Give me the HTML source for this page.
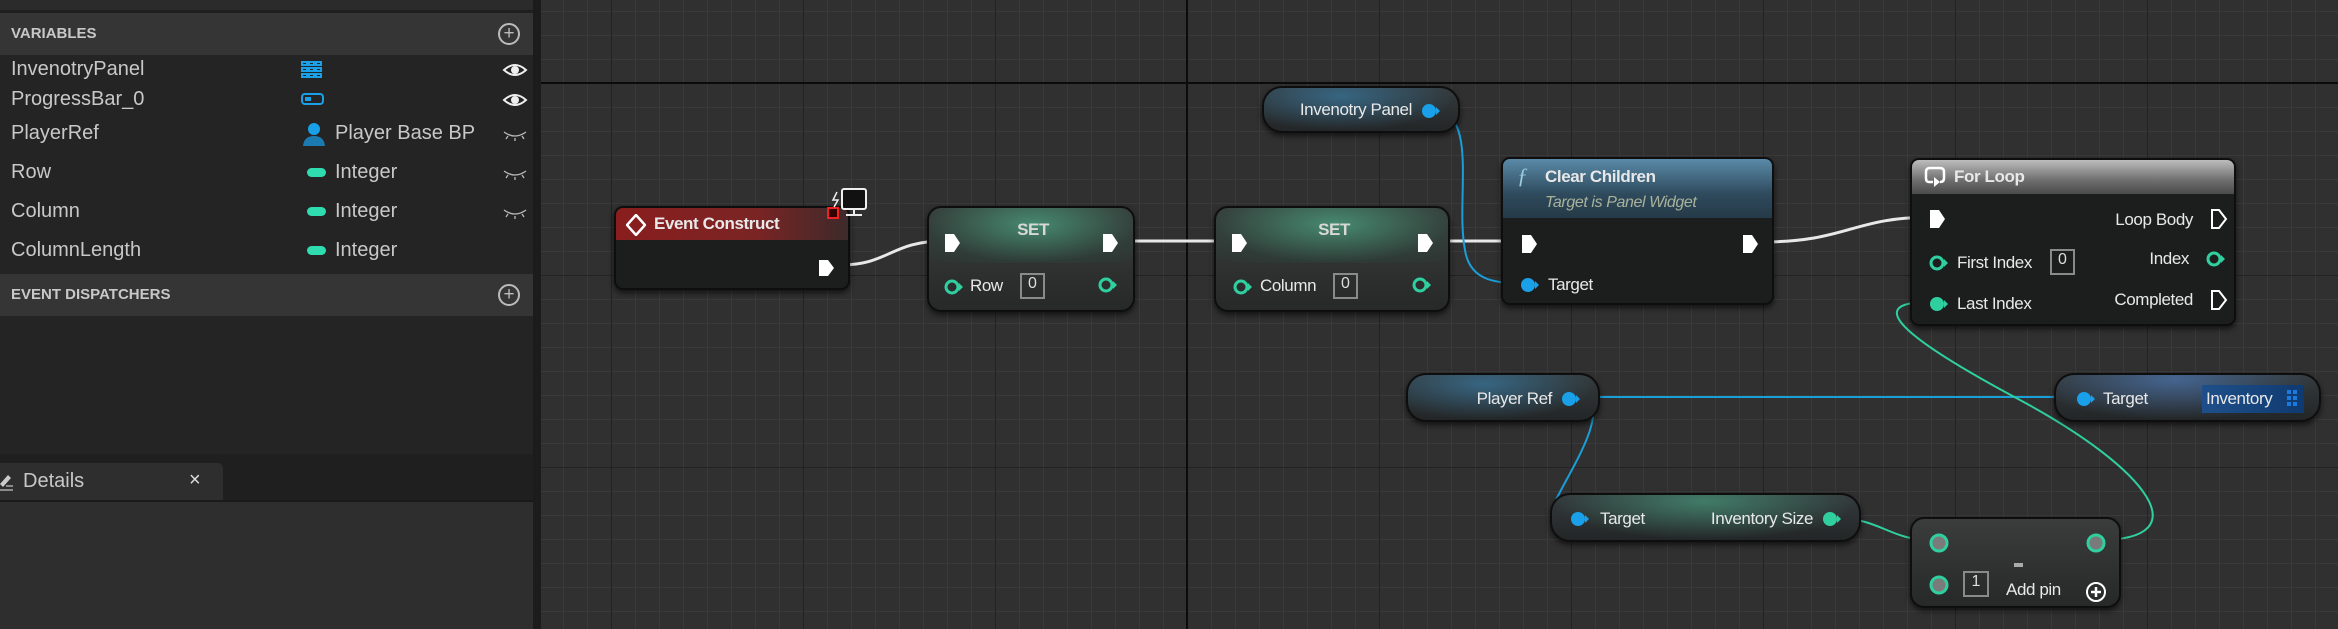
<!DOCTYPE html>
<html><head><meta charset="utf-8"><style>
*{margin:0;padding:0;box-sizing:border-box}
body{width:2338px;height:629px;overflow:hidden;position:relative;font-family:"Liberation Sans",sans-serif;
background-color:#303030;
background-image:
linear-gradient(#0b0b0b,#0b0b0b),linear-gradient(#0b0b0b,#0b0b0b),
linear-gradient(to right,#232323 1px,transparent 1px),linear-gradient(to bottom,#232323 1px,transparent 1px),
linear-gradient(to right,#3a3a3a 1px,transparent 1px),linear-gradient(to bottom,#3a3a3a 1px,transparent 1px);
background-size:2px 629px,2338px 2px,192px 192px,192px 192px,24px 24px,24px 24px;
background-position:1186px 0,0 82px,35px 83px,35px 83px,11px 11px,11px 11px;
background-repeat:no-repeat,no-repeat,repeat,repeat,repeat,repeat}
.a{position:absolute}
.panel{left:0;top:0;width:533px;height:629px;background:#1f1f1f}
.strip{left:533px;top:0;width:8px;height:629px;background:#1c1c1c}
.hdr{position:absolute;left:0;width:533px;height:42px;background:#353535;color:#c8c8c8;font-weight:bold;font-size:15px;line-height:42px;padding-left:11px}
.plus{position:absolute;right:13px;top:10px;width:22px;height:22px;border:2px solid #bbb;border-radius:50%;color:#bbb;font-size:19px;line-height:17px;text-align:center;font-weight:normal}
.row{position:absolute;left:11px;color:#c8c8c8;font-size:20px}
.ty{position:absolute;left:335px;color:#c8c8c8;font-size:20px}
.pill{position:absolute;left:307px;width:19px;height:9px;border-radius:5px;background:#2fdcb0}
.node{position:absolute;border-radius:9px;background:#1c1e1d;border:2px solid #0e0e0e;box-shadow:0 3px 6px rgba(0,0,0,.6);overflow:hidden}
.t{position:absolute;color:#e8e8e8;font-size:17px;letter-spacing:-0.4px;white-space:nowrap}
.pure{background:linear-gradient(#3a3d3c,#262928);border-radius:14px}
.box{position:absolute;border:2px solid #8a8a8a;color:#ddd;font-size:16px;text-align:center}
</style></head><body>
<div class="a panel">
 <div class="a" style="left:0;top:0;width:533px;height:10px;background:#2b2b2b"></div>
 <div class="a" style="left:0;top:14px;width:533px;height:440px;background:#242424"></div>
 <div class="hdr" style="top:13px">VARIABLES<div class="plus">+</div></div>
 <div class="row" style="top:58px">InvenotryPanel</div>
 <div class="row" style="top:88px">ProgressBar_0</div>
 <div class="row" style="top:122px">PlayerRef</div>
 <div class="row" style="top:161px">Row</div>
 <div class="row" style="top:200px">Column</div>
 <div class="row" style="top:239px">ColumnLength</div>
 <svg class="a" style="left:300px;top:60px" width="26" height="20"><g fill="none" stroke="#19a0e8" stroke-width="2"><rect x="2" y="2" width="5" height="3"/><rect x="9" y="2" width="5" height="3"/><rect x="16" y="2" width="5" height="3"/><rect x="2" y="8" width="5" height="3"/><rect x="9" y="8" width="5" height="3"/><rect x="16" y="8" width="5" height="3"/><rect x="2" y="14" width="5" height="3"/><rect x="9" y="14" width="5" height="3"/><rect x="16" y="14" width="5" height="3"/></g></svg>
 <svg class="a" style="left:300px;top:92px" width="26" height="16"><rect x="2" y="2" width="21" height="10" rx="3" fill="none" stroke="#19a0e8" stroke-width="2"/><rect x="5" y="5" width="6" height="4" fill="#19a0e8"/></svg>
 <svg class="a" style="left:302px;top:121px" width="26" height="26"><circle cx="12" cy="8" r="6" fill="#19a0e8"/><path d="M1 25 Q2 15 12 15 Q22 15 23 25Z" fill="#1b7bb0"/></svg>
 <div class="ty" style="top:122px">Player Base BP</div>
 <div class="pill" style="top:168px"></div><div class="ty" style="top:161px">Integer</div>
 <div class="pill" style="top:207px"></div><div class="ty" style="top:200px">Integer</div>
 <div class="pill" style="top:246px"></div><div class="ty" style="top:239px">Integer</div>
 <svg class="a" style="left:502px;top:60px" width="26" height="160"><g fill="none" stroke="#eee" stroke-width="2"><path d="M2 10 Q13 0 24 10 Q13 20 2 10Z"/><circle cx="13" cy="10" r="3" fill="#eee"/><path d="M2 40 Q13 30 24 40 Q13 50 2 40Z"/><circle cx="13" cy="40" r="3" fill="#eee"/></g><g fill="none" stroke="#bbb" stroke-width="1.3"><path d="M2 72 Q13 80 24 72M6 76l-2 3M13 78v3M20 76l2 3"/><path d="M2 111 Q13 119 24 111M6 115l-2 3M13 117v3M20 115l2 3"/><path d="M2 150 Q13 158 24 150M6 154l-2 3M13 156v3M20 154l2 3"/></g></svg>
 <div class="hdr" style="top:274px">EVENT DISPATCHERS<div class="plus">+</div></div>
 <div class="a" style="left:0;top:463px;width:223px;height:38px;background:#2e2e2e;border-radius:0 5px 0 0"></div>
 <svg class="a" style="left:0;top:472px" width="14" height="20"><path d="M0 12 L8 3 L11 6 L3 15Z" fill="#ccc"/><path d="M0 18h13M6 14h7" stroke="#aaa" stroke-width="1.5"/></svg>
 <div class="a" style="left:23px;top:470px;color:#c8c8c8;font-size:20px">Details</div>
 <div class="a" style="left:189px;top:469px;color:#ddd;font-size:20px">×</div>
 <div class="a" style="left:0;top:500px;width:533px;height:2px;background:#1a1a1a"></div>
 <div class="a" style="left:0;top:502px;width:533px;height:127px;background:#2e2e2e"></div>
</div>
<div class="a strip"></div>

<svg class="a" style="left:0;top:0" width="2338" height="629">
 <g fill="none" stroke="#e8e8e8" stroke-width="3">
  <path d="M840 265 C890 265 890 241 945 241"/>
  <path d="M1115 241 L1235 241"/>
  <path d="M1425 241 L1527 241"/>
  <path d="M1760 242 C1850 242 1850 217 1935 217"/>
 </g>
 <g fill="none" stroke="#1a9ed8" stroke-width="2">
  <path d="M1432 110 C1480 110 1455 200 1465 250 C1470 283 1500 283 1522 283"/>
  <path d="M1574 397 L2076 397"/>
  <path d="M1574 397 C1620 397 1570 470 1556 500 C1550 518 1560 518 1571 518"/>
 </g>
 <g fill="none" stroke="#2fcf9f" stroke-width="2">
  <path d="M1835 518 C1880 518 1890 540 1930 540"/>
  <path d="M2099 540 C2200 540 2150 470 2020 400 C1870 320 1880 302 1930 302"/>
 </g>
</svg>

<div class="node" style="left:614px;top:206px;width:236px;height:84px">
 <div class="a" style="left:0;top:0;width:236px;height:32px;background:linear-gradient(90deg,#8a1e1e,#7a2424 60%,#3a2a2a)"></div>
 <svg class="a" style="left:10px;top:6px" width="20" height="22"><path d="M10 1 L19 11 L10 21 L1 11Z" fill="none" stroke="#fff" stroke-width="2.5"/></svg>
 <div class="t" style="left:38px;top:6px;font-weight:bold">Event Construct</div>
 <svg class="a" style="left:201px;top:50px" width="20" height="20"><path d="M2 2 H11 L17 10 L11 18 H2Z" fill="#fff"/></svg>
</div>
<svg class="a" style="left:826px;top:186px" width="44" height="40"><rect x="2" y="22" width="10" height="10" fill="#300" stroke="#e22" stroke-width="2"/><rect x="16" y="3" width="24" height="20" rx="2" fill="#111" stroke="#eee" stroke-width="2"/><path d="M28 23v5M20 29h16" stroke="#eee" stroke-width="2"/><path d="M11 6 L7 14 L12 14 L8 21" stroke="#eee" stroke-width="1.5" fill="none"/></svg>

<div class="node pure" style="left:927px;top:206px;width:208px;height:106px">
 <div class="a" style="left:0;top:0;width:208px;height:55px;background:radial-gradient(ellipse at 50% 30%,rgba(80,190,150,.6),rgba(40,90,70,.2) 70%,transparent)"></div>
 <div class="t" style="left:0;width:208px;text-align:center;top:12px;font-weight:bold;color:#d8d8d8">SET</div>
 <svg class="a" style="left:14px;top:24px" width="20" height="22"><path d="M2 2 H11 L17 11 L11 20 H2Z" fill="#fff"/></svg>
 <svg class="a" style="left:172px;top:24px" width="20" height="22"><path d="M2 2 H11 L17 11 L11 20 H2Z" fill="#fff"/></svg>
 <svg class="a" style="left:14px;top:69px" width="22" height="20"><circle cx="9" cy="10" r="6" fill="none" stroke="#2fcf9f" stroke-width="3"/><path d="M16 6 L20 10 L16 14Z" fill="#2fcf9f"/></svg>
 <div class="t" style="left:41px;top:68px">Row</div>
 <div class="box" style="left:91px;top:65px;width:25px;height:26px">0</div>
 <svg class="a" style="left:168px;top:67px" width="22" height="20"><circle cx="9" cy="10" r="6" fill="none" stroke="#2fcf9f" stroke-width="3"/><path d="M16 6 L20 10 L16 14Z" fill="#2fcf9f"/></svg>
</div>
<div class="node pure" style="left:1214px;top:206px;width:236px;height:106px">
 <div class="a" style="left:0;top:0;width:236px;height:55px;background:radial-gradient(ellipse at 50% 30%,rgba(80,190,150,.6),rgba(40,90,70,.2) 70%,transparent)"></div>
 <div class="t" style="left:0;width:236px;text-align:center;top:12px;font-weight:bold;color:#d8d8d8">SET</div>
 <svg class="a" style="left:14px;top:24px" width="20" height="22"><path d="M2 2 H11 L17 11 L11 20 H2Z" fill="#fff"/></svg>
 <svg class="a" style="left:200px;top:24px" width="20" height="22"><path d="M2 2 H11 L17 11 L11 20 H2Z" fill="#fff"/></svg>
 <svg class="a" style="left:16px;top:69px" width="22" height="20"><circle cx="9" cy="10" r="6" fill="none" stroke="#2fcf9f" stroke-width="3"/><path d="M16 6 L20 10 L16 14Z" fill="#2fcf9f"/></svg>
 <div class="t" style="left:44px;top:68px">Column</div>
 <div class="box" style="left:117px;top:65px;width:25px;height:26px">0</div>
 <svg class="a" style="left:195px;top:67px" width="22" height="20"><circle cx="9" cy="10" r="6" fill="none" stroke="#2fcf9f" stroke-width="3"/><path d="M16 6 L20 10 L16 14Z" fill="#2fcf9f"/></svg>
</div>

<div class="node pure" style="left:1262px;top:86px;width:198px;height:47px;border-radius:20px;background:radial-gradient(ellipse at 40% 20%,rgba(60,140,190,.55),transparent 70%),linear-gradient(#343a3c,#232627)">
 <div class="t" style="right:46px;top:12px">Invenotry Panel</div>
 <svg class="a" style="left:157px;top:14px" width="20" height="18"><circle cx="8" cy="9" r="7" fill="#1aa0e8"/><path d="M15 5 L19 9 L15 13Z" fill="#1aa0e8"/></svg>
</div>

<div class="node" style="left:1501px;top:157px;width:273px;height:148px">
 <div class="a" style="left:0;top:0;width:273px;height:59px;background:linear-gradient(180deg,#5a8aa8,#2e4a5c 60%,#263a48)"></div>
 <div class="t" style="left:14px;top:4px;font-style:italic;font-family:'Liberation Serif',serif;font-size:22px;color:#9cd">ƒ</div>
 <div class="t" style="left:42px;top:8px;font-weight:bold">Clear Children</div>
 <div class="t" style="left:42px;top:35px;font-style:italic;color:#a9b29a;font-size:16px">Target is Panel Widget</div>
 <svg class="a" style="left:17px;top:74px" width="20" height="22"><path d="M2 2 H11 L17 11 L11 20 H2Z" fill="#fff"/></svg>
 <svg class="a" style="left:238px;top:74px" width="20" height="22"><path d="M2 2 H11 L17 11 L11 20 H2Z" fill="#fff"/></svg>
 <svg class="a" style="left:17px;top:117px" width="20" height="18"><circle cx="8" cy="9" r="7" fill="#1aa0e8"/><path d="M15 5 L19 9 L15 13Z" fill="#1aa0e8"/></svg>
 <div class="t" style="left:45px;top:116px">Target</div>
</div>

<div class="node" style="left:1910px;top:158px;width:326px;height:168px">
 <div class="a" style="left:0;top:0;width:326px;height:34px;background:linear-gradient(180deg,#bdbdbd,#6e6e6e 60%,#4a4a4a)"></div>
 <svg class="a" style="left:12px;top:6px" width="24" height="24"><path d="M9 16 H5 Q2 16 2 12 V6 Q2 2 6 2 H16 Q20 2 20 6 V12 Q20 16 16 16" fill="none" stroke="#fff" stroke-width="2.5"/><path d="M10 11 L16 16 L10 21Z" fill="#fff"/></svg>
 <div class="t" style="left:42px;top:7px;font-weight:bold">For Loop</div>
 <svg class="a" style="left:16px;top:48px" width="20" height="22"><path d="M2 2 H11 L17 11 L11 20 H2Z" fill="#fff"/></svg>
 <div class="t" style="right:41px;top:50px">Loop Body</div>
 <svg class="a" style="left:298px;top:48px" width="20" height="22"><path d="M2 2 H9 L16 11 L9 20 H2Z" fill="none" stroke="#fff" stroke-width="2"/></svg>
 <svg class="a" style="left:16px;top:93px" width="22" height="20"><circle cx="9" cy="10" r="6" fill="none" stroke="#2fcf9f" stroke-width="3"/><path d="M16 6 L20 10 L16 14Z" fill="#2fcf9f"/></svg>
 <div class="t" style="left:45px;top:93px">First Index</div>
 <div class="box" style="left:138px;top:89px;width:25px;height:26px">0</div>
 <div class="t" style="right:45px;top:89px">Index</div>
 <svg class="a" style="left:293px;top:89px" width="22" height="20"><circle cx="9" cy="10" r="6" fill="none" stroke="#2fcf9f" stroke-width="3"/><path d="M16 6 L20 10 L16 14Z" fill="#2fcf9f"/></svg>
 <svg class="a" style="left:16px;top:134px" width="22" height="20"><circle cx="9" cy="10" r="7" fill="#2fcf9f"/><path d="M16 6 L20 10 L16 14Z" fill="#2fcf9f"/></svg>
 <div class="t" style="left:45px;top:134px">Last Index</div>
 <div class="t" style="right:41px;top:130px">Completed</div>
 <svg class="a" style="left:298px;top:129px" width="20" height="22"><path d="M2 2 H9 L16 11 L9 20 H2Z" fill="none" stroke="#fff" stroke-width="2"/></svg>
</div>

<div class="node pure" style="left:1406px;top:373px;width:194px;height:49px;border-radius:20px;background:radial-gradient(ellipse at 40% 20%,rgba(60,140,190,.55),transparent 70%),linear-gradient(#343a3c,#232627)">
 <div class="t" style="right:46px;top:14px">Player Ref</div>
 <svg class="a" style="left:153px;top:15px" width="20" height="18"><circle cx="8" cy="9" r="7" fill="#1aa0e8"/><path d="M15 5 L19 9 L15 13Z" fill="#1aa0e8"/></svg>
</div>

<div class="node pure" style="left:2054px;top:373px;width:267px;height:49px;border-radius:20px;background:radial-gradient(ellipse at 45% 10%,rgba(80,130,200,.6),transparent 70%),linear-gradient(#343a3c,#232627)">
 <svg class="a" style="left:20px;top:15px" width="20" height="18"><circle cx="8" cy="9" r="7" fill="#1aa0e8"/><path d="M15 5 L19 9 L15 13Z" fill="#1aa0e8"/></svg>
 <div class="t" style="left:47px;top:14px">Target</div>
 <div class="a" style="left:146px;top:10px;width:102px;height:28px;background:linear-gradient(90deg,#1f4f8a,#0f3a70)"></div>
 <div class="t" style="left:150px;top:14px">Inventory</div>
 <svg class="a" style="left:231px;top:15px" width="14" height="18"><g fill="#1a7ae0"><rect x="0" y="0" width="4" height="4"/><rect x="6" y="0" width="4" height="4"/><rect x="0" y="6" width="4" height="4"/><rect x="6" y="6" width="4" height="4"/><rect x="0" y="12" width="4" height="4"/><rect x="6" y="12" width="4" height="4"/></g></svg>
</div>

<div class="node pure" style="left:1550px;top:493px;width:311px;height:49px;border-radius:20px;background:radial-gradient(ellipse at 50% 15%,rgba(80,190,150,.5),transparent 70%),linear-gradient(#343a3c,#232627)">
 <svg class="a" style="left:18px;top:15px" width="20" height="18"><circle cx="8" cy="9" r="7" fill="#1aa0e8"/><path d="M15 5 L19 9 L15 13Z" fill="#1aa0e8"/></svg>
 <div class="t" style="left:48px;top:14px">Target</div>
 <div class="t" style="right:46px;top:14px">Inventory Size</div>
 <svg class="a" style="left:270px;top:15px" width="20" height="18"><circle cx="8" cy="9" r="7" fill="#2fcf9f"/><path d="M15 5 L19 9 L15 13Z" fill="#2fcf9f"/></svg>
</div>

<div class="node pure" style="left:1910px;top:517px;width:211px;height:91px">
 <svg class="a" style="left:16px;top:13px" width="22" height="22"><circle cx="11" cy="11" r="8" fill="#7a7a7a" stroke="#2fcf9f" stroke-width="3"/></svg>
 <svg class="a" style="left:173px;top:13px" width="22" height="22"><circle cx="11" cy="11" r="8" fill="#7a7a7a" stroke="#2fcf9f" stroke-width="3"/></svg>
 <div class="a" style="left:102px;top:44px;width:9px;height:4px;background:#aaa"></div>
 <svg class="a" style="left:16px;top:55px" width="22" height="22"><circle cx="11" cy="11" r="8" fill="#7a7a7a" stroke="#2fcf9f" stroke-width="3"/></svg>
 <div class="box" style="left:51px;top:52px;width:26px;height:26px">1</div>
 <div class="t" style="left:94px;top:61px">Add pin</div>
 <svg class="a" style="left:172px;top:61px" width="24" height="24"><circle cx="12" cy="12" r="9" fill="none" stroke="#fff" stroke-width="2"/><path d="M12 7v10M7 12h10" stroke="#fff" stroke-width="2.5"/></svg>
</div>
</body></html>
